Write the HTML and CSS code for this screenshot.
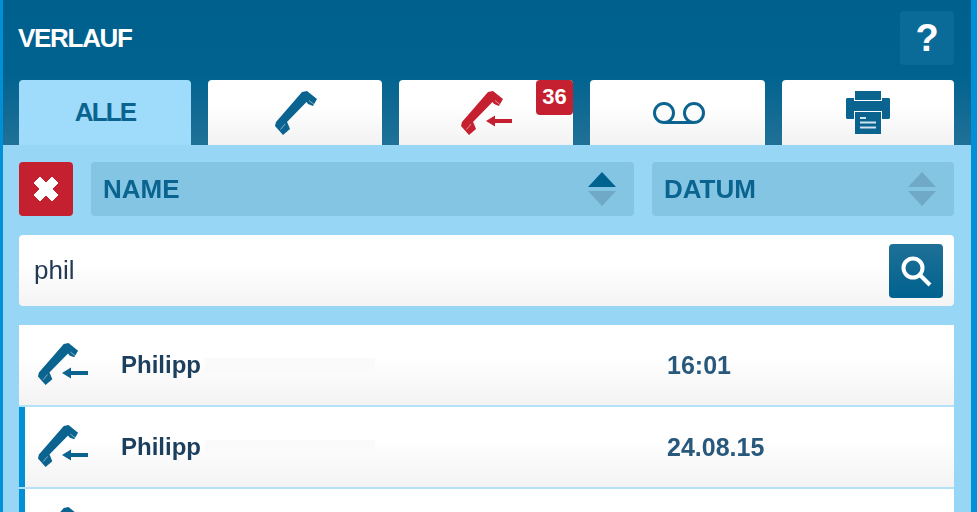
FILE: index.html
```html
<!doctype html>
<html lang="de">
  <head>
    <meta charset="utf-8" />
    <title>Verlauf</title>
    <link rel="stylesheet" href="styles.css">
  </head>
  <body>
    <svg class="defs" width="0" height="0">
      <symbol id="handset" viewBox="0 0 43 44">
        <path d="M27 1 32 0 42 8 38 15 33 13 31.500 11 12 31 13 33 15 38 8 44 0 35 1 31Z" />
        <path class="slit" d="M34 9.500 39 13.500M10 33 5.500 38.500" />
      </symbol>
      <symbol id="arrow" viewBox="0 0 26 12">
        <path d="M0 6 9 0.500V4H26V8H9V11.500Z" />
      </symbol>
    </svg>
    <div class="app">
      <header class="top">
        <div class="title-row">
          <span class="title">VERLAUF</span>
          <span class="help">?</span>
        </div>
        <nav class="tabs">
          <div class="tab tab-active">ALLE</div>
          <div class="tab">
            <svg class="phone phone-solo" width="43" height="44"><use href="#handset" /></svg>
          </div>
          <div class="tab tab-missed">
            <span class="call-icon">
              <svg class="phone" width="43" height="44"><use href="#handset" /></svg>
              <svg class="call-arrow" width="26" height="12"><use href="#arrow" /></svg>
            </span>
            <span class="badge">36</span>
          </div>
          <div class="tab tab-voicemail">
            <svg class="voicemail" width="52" height="22" viewBox="0 0 52 22">
              <circle cx="11" cy="11" r="9.500" />
              <circle cx="41" cy="11" r="9.500" />
              <path d="M11 20.500H41" />
            </svg>
          </div>
          <div class="tab tab-print">
            <svg class="printer" width="44" height="43" viewBox="0 0 44 43">
              <path d="M9 0H35V9H9Z" />
              <path d="M1 7H8V10H36V7H43L44 8V27L43 28H36V20H8V28H1L0 27V8Z" />
              <path d="M9 21H35V43H9Z" />
              <path class="printer-line" d="M14 27H20M14 31.500H30M14 36.500H30" />
            </svg>
          </div>
        </nav>
      </header>
      <main class="panel">
        <div class="sort-row">
          <button class="clear">
            <svg width="30" height="30" viewBox="0 0 30 30"><path d="M3 9 9 3 15 9 21 3 27 9 21 15 27 21 21 27 15 21 9 27 3 21 9 15Z" /></svg>
          </button>
          <div class="sort sort-name">
            <span>NAME</span>
            <span class="sort-arrows">
              <i class="up on"></i>
              <i class="down"></i>
            </span>
          </div>
          <div class="sort sort-date">
            <span>DATUM</span>
            <span class="sort-arrows">
              <i class="up"></i>
              <i class="down"></i>
            </span>
          </div>
        </div>
        <div class="search">
          <span class="query">phil</span>
          <button class="search-btn">
            <svg width="34" height="34" viewBox="0 0 34 34"><circle cx="14" cy="14" r="9.500" /><path d="M21 21 31 31" /></svg>
          </button>
        </div>
        <div class="list">
          <div class="row">
            <span class="call-icon">
              <svg class="phone" width="43" height="42"><use href="#handset" /></svg>
              <svg class="call-arrow" width="26" height="12"><use href="#arrow" /></svg>
            </span>
            <span class="name">Philipp</span>
            <span class="ghost"></span>
            <span class="date">16:01</span>
          </div>
          <div class="row row-marked">
            <span class="call-icon">
              <svg class="phone" width="43" height="42"><use href="#handset" /></svg>
              <svg class="call-arrow" width="26" height="12"><use href="#arrow" /></svg>
            </span>
            <span class="name">Philipp</span>
            <span class="ghost"></span>
            <span class="date">24.08.15</span>
          </div>
          <div class="row row-marked">
            <span class="call-icon">
              <svg class="phone" width="43" height="42"><use href="#handset" /></svg>
              <svg class="call-arrow" width="26" height="12"><use href="#arrow" /></svg>
            </span>
          </div>
        </div>
      </main>
    </div>
  </body>
</html>
```

FILE: styles.css
```css
html,
body
{
    margin: 0;
    height: 512px;
    overflow: hidden;
}

body
{
    font-family: "Liberation Sans", Arial, sans-serif;
    background: #97d6f4;
}

.defs
{
    display: block;
    height: 0;
}

.app
{
    height: 512px;
    border-left: 3px solid #0090d8;
    border-right: 6px solid #0090d8;
    overflow: hidden;
    filter: blur(0.7px);
}

.top
{
    height: 145px;
    box-sizing: border-box;
    padding: 11px 17px 0 16px;
    background: linear-gradient(#00608d, #00628f 50%, #207197);
}

.title-row
{
    display: flex;
    justify-content: space-between;
    align-items: center;
    height: 54px;
    margin-bottom: 15px;
}

.title
{
    margin-left: -1px;
    font-size: 26px;
    font-weight: bold;
    letter-spacing: -1.300px;
    color: #fff;
}

.help
{
    width: 54px;
    height: 54px;
    border-radius: 4px;
    background: #0a6a98;
    color: #fff;
    font-size: 38px;
    font-weight: bold;
    line-height: 54px;
    text-align: center;
}

.tabs
{
    display: flex;
    gap: 17px;
}

.tab
{
    position: relative;
    flex: none;
    width: 174px;
    height: 65px;
    display: flex;
    align-items: center;
    justify-content: center;
    border-radius: 4px 4px 0 0;
    background: linear-gradient(#fff 40%, #f2f2f2);
}

.tab-active
{
    width: 172px;
    background: #9fdcfb;
    color: #0b6490;
    font-size: 26px;
    font-weight: bold;
    letter-spacing: -1.800px;
}

.tab-voicemail
{
    width: 175px;
}

.tab-print
{
    flex: 1;
}

.phone
{
    display: block;
    fill: #0b6490;
}

.phone-solo
{
    margin-left: 2px;
}

.slit
{
    fill: none;
    stroke: #fff;
    stroke-width: 1;
    opacity: 0.5;
}

.call-icon
{
    position: relative;
    display: block;
    width: 51px;
    height: 44px;
    color: #0b6490;
}

.call-arrow
{
    position: absolute;
    left: 25px;
    top: 24px;
    fill: #0b6490;
}

.tab-missed .phone,
.tab-missed .call-arrow
{
    fill: #c4202f;
}

.badge
{
    position: absolute;
    top: 0;
    right: 0;
    width: 37px;
    height: 35px;
    border-radius: 4px;
    background: #c4202f;
    color: #fff;
    font-size: 22px;
    font-weight: bold;
    line-height: 33px;
    text-align: center;
}

.voicemail
{
    margin-left: 3px;
    fill: none;
    stroke: #0b6490;
    stroke-width: 3;
}

.printer
{
    fill: #0b6490;
}

.printer-line
{
    fill: none;
    stroke: #cfe3ee;
    stroke-width: 2;
}

.panel
{
    padding: 17px 17px 0 16px;
}

.sort-row
{
    display: flex;
    gap: 18px;
    height: 54px;
}

.clear
{
    width: 54px;
    padding: 0;
    border: 0;
    border-radius: 4px;
    background: #c4202f;
    display: flex;
    align-items: center;
    justify-content: center;
}

.clear svg
{
    fill: #fff;
    stroke: #fff;
    stroke-width: 1;
    stroke-linejoin: round;
}

.sort
{
    display: flex;
    align-items: center;
    justify-content: space-between;
    box-sizing: border-box;
    padding: 0 18px 0 12px;
    border-radius: 4px;
    background: #84c5e4;
    color: #0b6490;
    font-size: 26px;
    font-weight: bold;
}

.sort-name
{
    width: 543px;
}

.sort-date
{
    width: 302px;
}

.sort-arrows
{
    display: flex;
    flex-direction: column;
    gap: 4px;
}

.sort-arrows i
{
    display: block;
    width: 0;
    border-left: 14px solid transparent;
    border-right: 14px solid transparent;
}

.sort-arrows .up
{
    border-bottom: 15px solid #6fa9c6;
}

.sort-arrows .up.on
{
    border-bottom-color: #00628f;
}

.sort-arrows .down
{
    border-top: 15px solid #6fa9c6;
}

.search
{
    display: flex;
    align-items: center;
    justify-content: space-between;
    height: 71px;
    margin-top: 19px;
    padding: 0 11px 0 15px;
    border-radius: 4px;
    background: linear-gradient(#fff 40%, #f4f4f4);
}

.query
{
    color: #233a55;
    font-size: 26px;
}

.search-btn
{
    width: 54px;
    height: 54px;
    padding: 0;
    border: 0;
    border-radius: 4px;
    background: linear-gradient(#1f7096, #00628f);
    display: flex;
    align-items: center;
    justify-content: center;
}

.search-btn svg
{
    fill: none;
    stroke: #fff;
    stroke-width: 4;
}

.list
{
    margin-top: 19px;
    display: flex;
    flex-direction: column;
    gap: 2px;
}

.row
{
    display: flex;
    align-items: center;
    box-sizing: border-box;
    height: 80px;
    padding-left: 18px;
    background: linear-gradient(#fff 40%, #f3f3f3);
}

.row + .row
{
    box-shadow: 0 -2px 0 #b4e2f8;
}

.row-marked
{
    padding-left: 12px;
    border-left: 6px solid #0090d8;
}

.name
{
    width: 84px;
    margin-left: 33px;
    color: #1c3f5e;
    font-size: 24px;
    font-weight: bold;
}

.ghost
{
    width: 170px;
    height: 14px;
    margin-right: 292px;
    background: #fafafa;
}

.date
{
    color: #28587c;
    font-size: 25px;
    font-weight: bold;
}
```
